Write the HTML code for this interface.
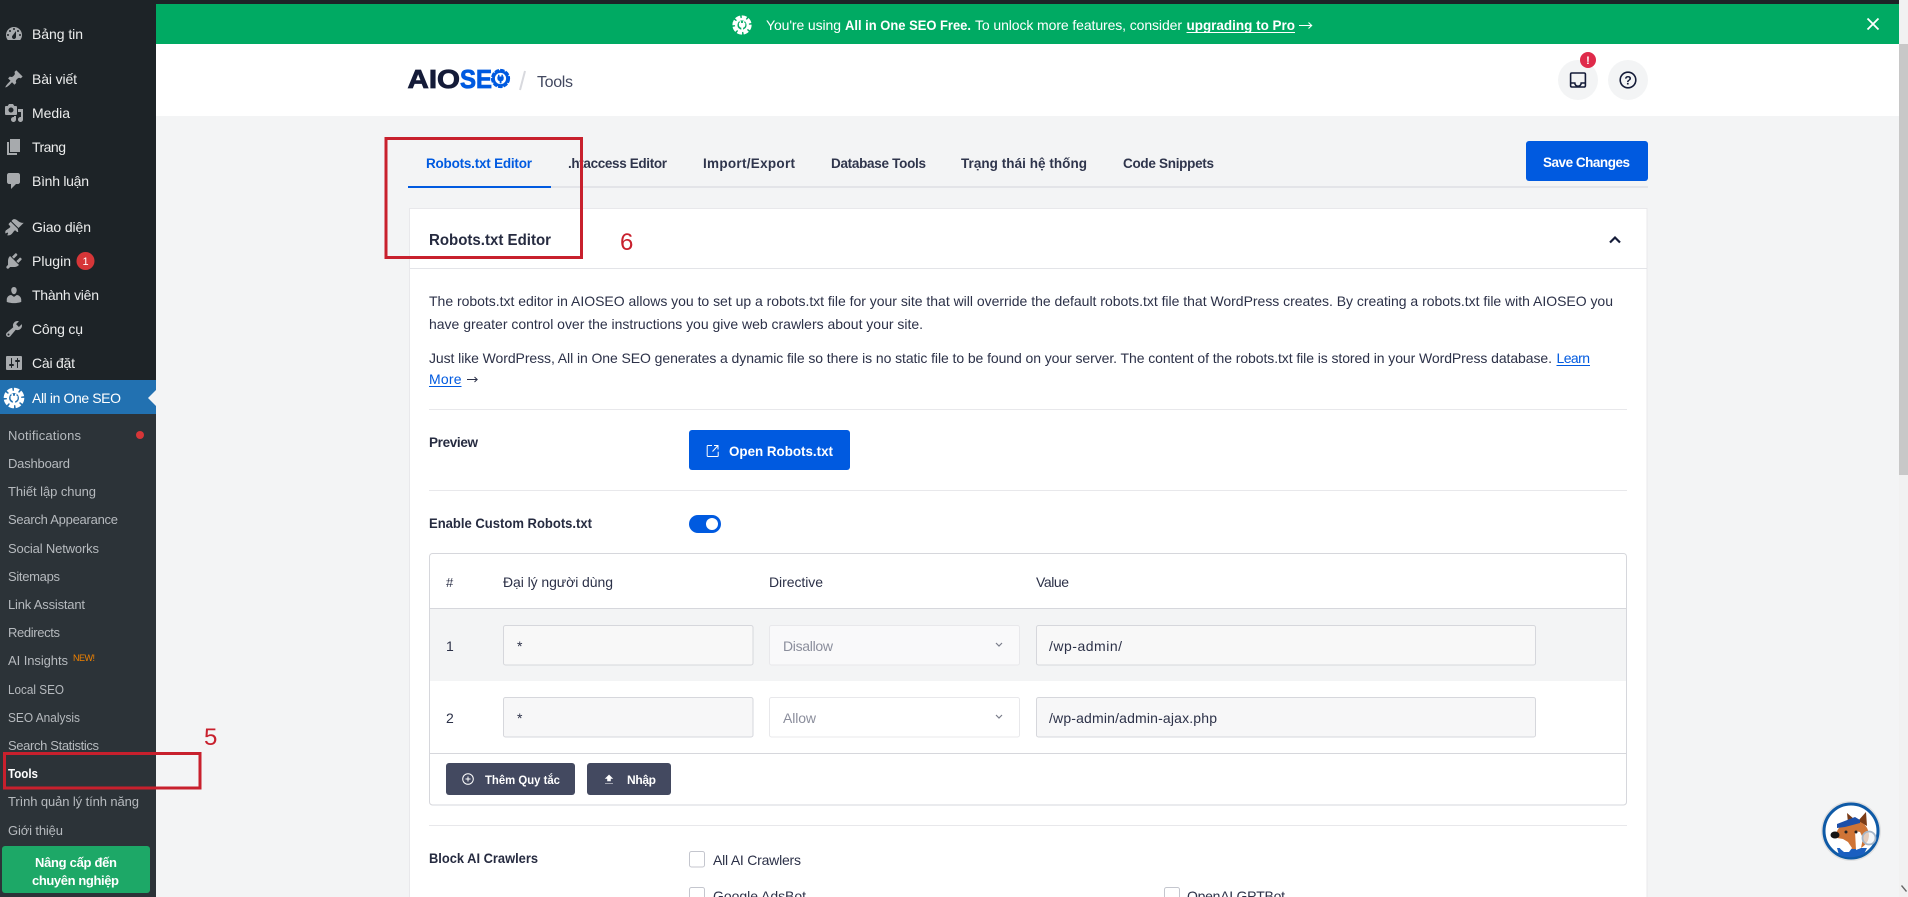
<!DOCTYPE html>
<html lang="vi">
<head>
<meta charset="utf-8">
<title>AIOSEO Tools</title>
<style>
html,body{margin:0;padding:0;width:1908px;height:897px;overflow:hidden;background:#f3f4f5}
svg{display:block}
text{font-family:"Liberation Sans","Noto Sans CJK SC",sans-serif;font-size:14px;fill:#141b38;white-space:pre}
.m{fill:#eceded;font-size:14px}
.s{fill:#b6babe;font-size:13px}
.b{font-weight:700}
.t{fill:#2f354c;font-weight:700;font-size:13.5px}
.w{fill:#fff}
.p{fill:#2c3148}
.ph{fill:#8b8e9c}
.l{fill:#005ae0}
.ic{fill:#a7aaad;fill-rule:evenodd}
</style>
</head>
<body>
<svg width="1908" height="897" viewBox="0 0 1908 897" xmlns="http://www.w3.org/2000/svg">
<!-- backgrounds -->
<rect width="1908" height="897" fill="#f3f4f5"/>
<rect x="1899" width="9" height="897" fill="#f1f1f1"/>
<rect x="1899" y="44" width="9" height="431" fill="#c8c8c8"/>
<path d="M1902 885l5 6-1 1-5-6z" fill="#666"/>
<rect width="1899" height="4" fill="#1d2327"/>
<rect x="156" y="4" width="1743" height="40" fill="#00aa63"/>
<rect x="156" y="44" width="1743" height="72" fill="#fff"/>

<!-- sidebar -->
<rect width="156" height="897" fill="#1d2327"/>
<rect y="414" width="156" height="483" fill="#2c3338"/>
<rect y="380" width="156" height="34" fill="#2271b1"/>
<path d="M156 390l-8 8 8 8z" fill="#f3f4f5"/>

<g transform="translate(4,24)"><path class="ic" d="M3.76 16h12.48c1.1-1.37 1.76-3.11 1.76-5 0-4.42-3.58-8-8-8s-8 3.58-8 8c0 1.89.66 3.63 1.76 5zM10 4c.55 0 1 .45 1 1s-.45 1-1 1-1-.45-1-1 .45-1 1-1zM6 6c.55 0 1 .45 1 1s-.45 1-1 1-1-.45-1-1 .45-1 1-1zm8 0c.55 0 1 .45 1 1s-.45 1-1 1-1-.45-1-1 .45-1 1-1zm-5.37 5.55L12 7v6c0 1.1-.9 2-2 2s-2-.9-2-2c0-.57.24-1.08.63-1.45zM4 10c.55 0 1 .45 1 1s-.45 1-1 1-1-.45-1-1 .45-1 1-1zm12 0c.55 0 1 .45 1 1s-.45 1-1 1-1-.45-1-1 .45-1 1-1z"/></g>
<g transform="translate(4,69)"><path class="ic" d="M10.44 3.02l1.82-1.82 6.36 6.35-1.83 1.82c-1.05-.68-2.48-.57-3.41.36l-.75.75c-.92.93-1.04 2.35-.35 3.41l-1.83 1.82-2.41-2.41-2.8 2.79c-.42.42-3.38 2.71-3.8 2.29s1.86-3.39 2.28-3.81l2.79-2.79L4.1 9.36l1.83-1.82c1.05.69 2.48.57 3.4-.36l.75-.75c.93-.92 1.05-2.35.36-3.41z"/></g>
<g transform="translate(4,103)"><path class="ic" d="M13 11V4c0-.55-.45-1-1-1h-1.67L9 1H5L3.67 3H2c-.55 0-1 .45-1 1v7c0 .55.45 1 1 1h10c.55 0 1-.45 1-1zM7 4.5c1.38 0 2.5 1.12 2.5 2.5S8.38 9.5 7 9.5 4.5 8.38 4.5 7 5.62 4.5 7 4.5zM14 6h5v10.5c0 1.38-1.12 2.5-2.5 2.5S14 17.88 14 16.5s1.12-2.5 2.5-2.5c.17 0 .34.02.5.05V9h-3V6zm-4 8.05V13h2v3.5c0 1.38-1.12 2.5-2.5 2.5S7 17.88 7 16.5 8.12 14 9.5 14c.17 0 .34.02.5.05z"/></g>
<g transform="translate(4,137)"><path class="ic" d="M6 15V2h10v13H6zm-1 1h8v2H3V5h2v11z"/></g>
<g transform="translate(4,171)"><path class="ic" d="M5 2h9c1.1 0 2 .9 2 2v7c0 1.1-.9 2-2 2h-2l-5 5v-5H5c-1.1 0-2-.9-2-2V4c0-1.1.9-2 2-2z"/></g>
<g transform="translate(4,217)"><path class="ic" d="M14.48 11.06L7.41 3.99l1.5-1.5c.5-.56 2.3-.47 3.51.32 1.21.8 1.43 1.28 2.91 2.1 1.18.64 2.45 1.26 4.45.85zm-.71.71L6.7 4.7 4.93 6.47c-.39.39-.39 1.02 0 1.41l1.06 1.06c.39.39.39 1.03 0 1.42-.6.6-1.43 1.11-2.21 1.69-.35.26-.7.53-1.01.84C1.43 13.23.99 14.82 1.5 16.5c.86-.5 2.1-1.19 2.49-.8.39.4-.25 1.52-.79 2.49 1.67.54 3.27.1 4.63-1.27.31-.31.58-.66.84-1.01.58-.78 1.09-1.61 1.69-2.21.39-.39 1.03-.39 1.42 0l1.06 1.06c.39.39 1.02.39 1.41 0z"/></g>
<g transform="translate(4,251)"><path class="ic" d="M13.11 4.36L9.87 7.6 8 5.73l3.24-3.24c.35-.34 1.05-.2 1.56.32.52.51.66 1.21.31 1.55zm-8 1.77l.91-1.12 9.01 9.01-1.19.84c-.71.71-2.63 1.16-3.82 1.16H6.14L4.9 17.26c-.59.59-1.54.59-2.12 0-.59-.58-.59-1.53 0-2.12l1.24-1.24v-3.88c0-1.13.4-3.19 1.09-3.89zm7.26 3.97l3.24-3.24c.34-.35 1.04-.21 1.55.31.52.51.66 1.21.31 1.55l-3.24 3.25z"/></g>
<g transform="translate(4,285)"><path class="ic" d="M10 9.25c-2.27 0-2.73-3.44-2.73-3.44C7 4.02 7.82 2 9.97 2c2.16 0 2.98 2.02 2.71 3.81 0 0-.41 3.44-2.68 3.44zm0 2.57L12.72 10c2.39 0 4.52 2.33 4.52 4.53v2.49s-3.65 1.13-7.24 1.13c-3.65 0-7.24-1.13-7.24-1.13v-2.49c0-2.25 1.94-4.48 4.47-4.48z"/></g>
<g transform="translate(4,319)"><path class="ic" d="M16.68 9.77c-1.34 1.34-3.3 1.67-4.95.99l-5.41 6.52c-.99.99-2.59.99-3.58 0s-.99-2.59 0-3.57l6.52-5.42c-.68-1.65-.35-3.61.99-4.95 1.28-1.28 3.12-1.62 4.72-1.06l-2.89 2.89 2.82 2.82 2.86-2.87c.53 1.58.18 3.39-1.08 4.65zM3.81 16.21c.4.39 1.04.39 1.43 0 .4-.4.4-1.04 0-1.43-.39-.4-1.03-.4-1.43 0-.39.39-.39 1.03 0 1.43z"/></g>
<g transform="translate(4,353)"><path class="ic" d="M18 16V4c0-.55-.45-1-1-1H3c-.55 0-1 .45-1 1v12c0 .55.45 1 1 1h14c.55 0 1-.45 1-1zM8 11h1c.55 0 1 .45 1 1s-.45 1-1 1H8v1.5c0 .28-.22.5-.5.5s-.5-.22-.5-.5V13H6c-.55 0-1-.45-1-1s.45-1 1-1h1V5.5c0-.28.22-.5.5-.5s.5.22.5.5V11zm5-2h-1c-.55 0-1-.45-1-1s.45-1 1-1h1V5.5c0-.28.22-.5.5-.5s.5.22.5.5V7h1c.55 0 1 .45 1 1s-.45 1-1 1h-1v5.5c0 .28-.22.5-.5.5s-.5-.22-.5-.5V9z"/></g>
<!-- AIOSEO gear in menu -->
<g transform="translate(14,398)">
<circle r="8.6" fill="none" stroke="#fff" stroke-width="3.4" stroke-dasharray="5.2 1.5"/>
<circle r="7.2" fill="#fff"/>
<circle r="5" fill="#2271b1"/>
<path d="M-2.6-4.2h1.6v2h2v-2h1.6v2.2h1v2.2c0 1.6-1.2 2.6-2.4 2.8v2.4h-2.4V2.999C-1.800 2.800-3.400 1.800-3.400.2V-2h.8z" fill="#fff"/>
</g>

<g class="sb">
<text class="m" x="32" y="39" textLength="51">Bảng tin</text>
<text class="m" x="32" y="84" textLength="45">Bài viết</text>
<text class="m" x="32" y="118" textLength="38">Media</text>
<text class="m" x="32" y="152" textLength="34">Trang</text>
<text class="m" x="32" y="186" textLength="57">Bình luận</text>
<text class="m" x="32" y="232" textLength="59">Giao diện</text>
<text class="m" x="32" y="266" textLength="39">Plugin</text>
<text class="m" x="32" y="300" textLength="67">Thành viên</text>
<text class="m" x="32" y="334" textLength="51">Công cụ</text>
<text class="m" x="32" y="368" textLength="43">Cài đặt</text>
<text x="32" y="403" textLength="89" style="fill:#fff">All in One SEO</text>
<circle cx="85.500" cy="261" r="9" fill="#d63638"/>
<text x="85.500" y="265" text-anchor="middle" style="font-size:11px;fill:#fff">1</text>

<text class="s" x="8" y="440" textLength="73">Notifications</text>
<circle cx="140" cy="435" r="4" fill="#d63638"/>
<text class="s" x="8" y="468" textLength="62">Dashboard</text>
<text class="s" x="8" y="496" textLength="88">Thiết lập chung</text>
<text class="s" x="8" y="524" textLength="110">Search Appearance</text>
<text class="s" x="8" y="553" textLength="91">Social Networks</text>
<text class="s" x="8" y="581" textLength="52">Sitemaps</text>
<text class="s" x="8" y="609" textLength="77">Link Assistant</text>
<text class="s" x="8" y="637" textLength="52">Redirects</text>
<text class="s" x="8" y="665" textLength="60">AI Insights</text>
<text x="73" y="661" textLength="22" style="font-size:9px;fill:#f18200">NEW!</text>
<text class="s" x="8" y="694" textLength="56" lengthAdjust="spacingAndGlyphs">Local SEO</text>
<text class="s" x="8" y="722" textLength="72" lengthAdjust="spacingAndGlyphs">SEO Analysis</text>
<text class="s" x="8" y="750" textLength="91">Search Statistics</text>
<text class="b" x="8" y="778" textLength="30" lengthAdjust="spacingAndGlyphs" style="font-size:13px;fill:#fff">Tools</text>
<text class="s" x="8" y="806" textLength="131">Trình quản lý tính năng</text>
<text class="s" x="8" y="835" textLength="55">Giới thiệu</text>
<rect x="2" y="846" width="148" height="47" rx="3" fill="#1da867"/>
<text class="b w" x="35" y="867" textLength="82" style="font-size:13px">Nâng cấp đến</text>
<text class="b w" x="32" y="885" textLength="87" style="font-size:13px">chuyên nghiệp</text>
</g>

<!-- notice bar -->
<g transform="translate(742,25)">
<circle r="8" fill="none" stroke="#fff" stroke-width="3.2" stroke-dasharray="4.8 1.4"/>
<circle r="7" fill="#fff"/>
<circle r="4.600" fill="#00aa63"/>
<path d="M-2.400-3.900h1.500v1.900h1.800v-1.900h1.500v1.900h.9v2.100c0 1.500-1.100 2.400-2.200 2.600v2.200H-.7V2.700C-1.700 2.500-3.100 1.600-3.100.1V-2h.7z" fill="#fff"/>
</g>
<text class="w" x="766" y="30" textLength="75">You're using</text>
<text class="w b" x="845" y="30" textLength="126" lengthAdjust="spacingAndGlyphs">All in One SEO Free.</text>
<text class="w" x="975" y="30" textLength="207">To unlock more features, consider</text>
<text class="w b" x="1186.500" y="30" textLength="108.500" lengthAdjust="spacingAndGlyphs">upgrading to Pro</text>
<rect x="1186.500" y="32" width="108.500" height="1" fill="#fff"/>
<path d="M1299 25.500h12.500M1308.500 22.500l3.200 3-3.200 3" fill="none" stroke="#fff" stroke-width="1.100"/>
<path d="M1867.500 18.500l11 11m0-11l-11 11" stroke="#fff" stroke-width="1.800" fill="none"/>

<!-- header -->
<text x="407.500" y="88" textLength="52.500" lengthAdjust="spacingAndGlyphs" class="b" style="font-size:26px;stroke:#141b38;stroke-width:.8">AIO</text>
<text x="460" y="88" textLength="32" lengthAdjust="spacingAndGlyphs" class="b" style="font-size:26px;fill:#005ae0;stroke:#005ae0;stroke-width:.8">SE</text>
<g transform="translate(500.500,78.500)">
<circle r="8.600" fill="none" stroke="#005ae0" stroke-width="2" stroke-dasharray="4.500 1.200"/>
<circle r="8.400" fill="#005ae0"/>
<circle r="5.600" fill="#fff"/>
<path d="M-2.500-3.800h1.500v1.800h1.900v-1.800h1.500v1.800h.8v2.100c0 1.500-1.100 2.400-2.200 2.600v2.200H-.8V2.700C-1.800 2.500-3.100 1.500-3.100 0V-2h.6z" fill="#005ae0"/>
</g>
<path d="M525 71l-5 19" stroke="#d8d9de" stroke-width="2" fill="none"/>
<text x="537" y="87" textLength="36" style="font-size:16px;fill:#434960">Tools</text>

<circle cx="1578" cy="80" r="20" fill="#f3f4f5"/>
<circle cx="1628" cy="80" r="20" fill="#f3f4f5"/>
<path d="M1571.800 73h12.400a1.200 1.200 0 0 1 1.200 1.200v11.600a1.200 1.200 0 0 1-1.200 1.200h-12.400a1.200 1.200 0 0 1-1.200-1.200V74.200a1.200 1.200 0 0 1 1.200-1.200zM1570.600 83h4.200a3.200 3.200 0 0 0 6.400 0h4.200" fill="none" stroke="#141b38" stroke-width="1.600"/>
<circle cx="1588" cy="60" r="8" fill="#df2a4a"/>
<text x="1588" y="64" text-anchor="middle" class="b w" style="font-size:11px">!</text>
<circle cx="1628" cy="80" r="7.800" fill="none" stroke="#141b38" stroke-width="1.600"/>
<text x="1628" y="84.500" text-anchor="middle" class="b" style="font-size:12px">?</text>

<!-- tabs -->
<rect x="408" y="186" width="1240" height="2" fill="#e3e4e8"/>
<rect x="408" y="186" width="143" height="2" fill="#005ae0"/>
<text class="t" x="426" y="168" textLength="106" style="fill:#005ae0">Robots.txt Editor</text>
<text class="t" x="568" y="168" textLength="99">.htaccess Editor</text>
<text class="t" x="703" y="168" textLength="92">Import/Export</text>
<text class="t" x="831" y="168" textLength="95">Database Tools</text>
<text class="t" x="961" y="168" textLength="126">Trạng thái hệ thống</text>
<text class="t" x="1123" y="168" textLength="91">Code Snippets</text>
<rect x="1526" y="141" width="122" height="40" rx="3" fill="#005ae0"/>
<text class="b w" x="1543" y="167" textLength="87" style="font-size:13.500px">Save Changes</text>

<!-- card -->
<rect x="409.500" y="208.500" width="1237.500" height="700" fill="#fff" stroke="#e8e8eb"/>
<rect x="410" y="268" width="1237" height="1" fill="#e3e4e8"/>
<text class="b" x="429" y="245" textLength="122" lengthAdjust="spacingAndGlyphs" style="font-size:15.500px;fill:#262b40">Robots.txt Editor</text>
<path d="M1610 242.500l5-5 5 5" fill="none" stroke="#141b38" stroke-width="2.200"/>

<text class="p" x="429" y="306" textLength="1184">The robots.txt editor in AIOSEO allows you to set up a robots.txt file for your site that will override the default robots.txt file that WordPress creates. By creating a robots.txt file with AIOSEO you</text>
<text class="p" x="429" y="329" textLength="494">have greater control over the instructions you give web crawlers about your site.</text>
<text class="p" x="429" y="363" textLength="1123">Just like WordPress, All in One SEO generates a dynamic file so there is no static file to be found on your server. The content of the robots.txt file is stored in your WordPress database.</text>
<text class="l" x="1556.500" y="363" textLength="33.500">Learn</text>
<rect x="1556.500" y="365" width="33.500" height="1" fill="#005ae0"/>
<text class="l" x="429" y="384" textLength="32.500">More</text>
<rect x="429" y="386" width="32.500" height="1" fill="#005ae0"/>
<path d="M467 379.500h10M474.500 377l2.700 2.500-2.700 2.500" fill="none" stroke="#2c3148" stroke-width="1"/>

<rect x="429" y="409" width="1198" height="1" fill="#e8e8eb"/>
<text class="b" x="429" y="447" textLength="49" style="font-size:13.500px;fill:#262b40">Preview</text>
<rect x="689" y="430" width="161" height="40" rx="3" fill="#005ae0"/>
<path d="M712 445.500h-4a.8.8 0 0 0-.8.8v9.400a.8.8 0 0 0 .8.8h9.400a.8.8 0 0 0 .8-.8v-4M712.500 451.500l5.500-6M714 445.500h4v4" fill="none" stroke="#fff" stroke-width="1"/>
<text class="b w" x="729" y="456" textLength="104" lengthAdjust="spacingAndGlyphs" style="font-size:14px">Open Robots.txt</text>
<rect x="429" y="490" width="1198" height="1" fill="#e8e8eb"/>

<text class="b" x="429" y="528" textLength="163" lengthAdjust="spacingAndGlyphs" style="font-size:13.500px;fill:#262b40">Enable Custom Robots.txt</text>
<rect x="689" y="515" width="32" height="18" rx="9" fill="#005ae0"/>
<circle cx="712" cy="524" r="6" fill="#fff"/>

<!-- table -->
<rect x="429.500" y="553.500" width="1197" height="251.500" rx="3" fill="#fff" stroke="#d6d7dc"/>
<rect x="430" y="608" width="1196" height="73" fill="#f3f4f5"/>
<rect x="430" y="608" width="1196" height="1" fill="#d6d7dc"/>
<rect x="430" y="753" width="1196" height="1" fill="#d6d7dc"/>
<text class="p" x="446" y="587" style="font-size:13px">#</text>
<text class="p" x="503" y="587" textLength="110">Đại lý người dùng</text>
<text class="p" x="769" y="587" textLength="54">Directive</text>
<text class="p" x="1036" y="587" textLength="33">Value</text>

<text class="p" x="446" y="651">1</text>
<rect x="503.500" y="625.500" width="249.500" height="39.500" rx="2" fill="#f8f8f8" stroke="#d6d7dc"/>
<text class="p" x="517" y="651">*</text>
<rect x="769.500" y="625.500" width="250" height="39.500" rx="2" fill="#f9f9fa" stroke="#e8e8eb"/>
<text class="ph" x="783" y="651" textLength="50">Disallow</text>
<path d="M996 643l3 3 3-3" fill="none" stroke="#7a7d8a" stroke-width="1.200"/>
<rect x="1036.500" y="625.500" width="499" height="39.500" rx="2" fill="#f8f8f8" stroke="#d6d7dc"/>
<text class="p" x="1049" y="651" textLength="73">/wp-admin/</text>

<text class="p" x="446" y="723">2</text>
<rect x="503.500" y="697.500" width="249.500" height="39.500" rx="2" fill="#f7f7f8" stroke="#d6d7dc"/>
<text class="p" x="517" y="723">*</text>
<rect x="769.500" y="697.500" width="250" height="39.500" rx="2" fill="#fff" stroke="#e8e8eb"/>
<text class="ph" x="783" y="723" textLength="33">Allow</text>
<path d="M996 715l3 3 3-3" fill="none" stroke="#7a7d8a" stroke-width="1.200"/>
<rect x="1036.500" y="697.500" width="499" height="39.500" rx="2" fill="#f7f7f8" stroke="#d6d7dc"/>
<text class="p" x="1049" y="723" textLength="168">/wp-admin/admin-ajax.php</text>

<rect x="446" y="763" width="129" height="32" rx="3" fill="#434960"/>
<circle cx="468" cy="779" r="5.300" fill="none" stroke="#fff" stroke-width="1"/>
<path d="M465.500 779h5M468 776.500v5" stroke="#fff" stroke-width="1"/>
<text class="b w" x="485" y="784" textLength="75" lengthAdjust="spacingAndGlyphs" style="font-size:12px">Thêm Quy tắc</text>
<rect x="587" y="763" width="84" height="32" rx="3" fill="#434960"/>
<path d="M609 775l3.500 3.500h-2v2.500h-3v-2.500h-2zM605 783.500h8" fill="#fff" stroke="#fff" stroke-width=".6"/>
<text class="b w" x="627" y="784" textLength="29" style="font-size:12px">Nhập</text>

<rect x="429" y="825" width="1198" height="1" fill="#e8e8eb"/>
<text class="b" x="429" y="863" textLength="109" lengthAdjust="spacingAndGlyphs" style="font-size:13.500px;fill:#262b40">Block AI Crawlers</text>
<rect x="689.500" y="851.500" width="15" height="15.500" rx="2" fill="#fff" stroke="#c4c6ce"/>
<text class="p" x="713" y="865" textLength="88">All AI Crawlers</text>
<rect x="689.500" y="887.500" width="15" height="15.500" rx="2" fill="#fff" stroke="#c4c6ce"/>
<text class="p" x="713" y="901" textLength="93">Google AdsBot</text>
<rect x="1164.500" y="887.500" width="15" height="15.500" rx="2" fill="#fff" stroke="#c4c6ce"/>
<text class="p" x="1187" y="901" textLength="98">OpenAI GPTBot</text>

<!-- mascot -->
<g transform="translate(1851,831)">
<circle r="30" fill="#000" opacity=".08"/>
<circle r="27" fill="#fff" stroke="#0f5aa6" stroke-width="3"/>
<path d="M-12 24q12 5 25-1l3-6H-14z" fill="#1a5fc0"/>
<path d="M-3-8l-1-10 7 6zM7-10l8-9 1 14z" fill="#7a3b16"/>
<path d="M-15 3q3-10 12-12h12q8 3 9 13 0 9-10 14H-6q-5-4-6-8z" fill="#cf7436"/>
<path d="M-17 7q5 0 9 1l5 3 4 6-3 4-5 0q-7-5-10-14zM4 0l5 1 3 6-2 10-5 2z" fill="#fff"/>
<path d="M-14-7l18-7 5 3 0 3-15 4-8 1z" fill="#1d4fa8"/>
<ellipse cx="-16" cy="4" rx="4.500" ry="3.500" fill="#151515"/>
<circle cx="-5" cy="1" r="1.500" fill="#222"/>
<circle cx="5" cy="1" r="1.500" fill="#222"/>
<circle cx="18" cy="7" r="6.500" fill="#eef2f6" fill-opacity=".7" stroke="#a6b6c8" stroke-width="1.800"/>
</g>

<!-- red annotations -->
<rect x="386" y="138.500" width="195.500" height="119" fill="none" stroke="#c8202d" stroke-width="3"/>
<text x="620" y="250" style="font-size:24px;fill:#c8202d">6</text>
<rect x="4.500" y="753.500" width="195.500" height="34.500" fill="none" stroke="#c8202d" stroke-width="3"/>
<text x="204" y="745" style="font-size:24px;fill:#c8202d">5</text>
</svg>
</body>
</html>
